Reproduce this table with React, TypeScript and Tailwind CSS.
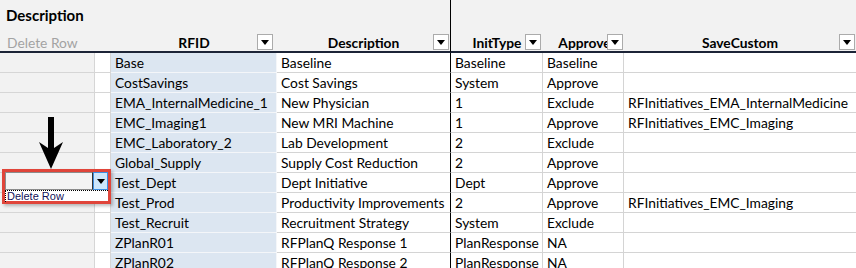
import { Fragment } from "react";

type Row = [string, string, string, string, string];

const ROWS: Row[] = [
  ["Base", "Baseline", "Baseline", "Baseline", ""],
  ["CostSavings", "Cost Savings", "System", "Approve", ""],
  ["EMA_InternalMedicine_1", "New Physician", "1", "Exclude", "RFInitiatives_EMA_InternalMedicine"],
  ["EMC_Imaging1", "New MRI Machine", "1", "Approve", "RFInitiatives_EMC_Imaging"],
  ["EMC_Laboratory_2", "Lab Development", "2", "Exclude", ""],
  ["Global_Supply", "Supply Cost Reduction", "2", "Approve", ""],
  ["Test_Dept", "Dept Initiative", "Dept", "Approve", ""],
  ["Test_Prod", "Productivity Improvements", "2", "Approve", "RFInitiatives_EMC_Imaging"],
  ["Test_Recruit", "Recruitment Strategy", "System", "Exclude", ""],
  ["ZPlanR01", "RFPlanQ Response 1", "PlanResponse", "NA", ""],
  ["ZPlanR02", "RFPlanQ Response 2", "PlanResponse", "NA", ""],
];

// filtro de encabezado (flechita de la tabla)
function FilterButton({ className }: { className: string }) {
  return (
    <span
      className={`absolute top-[1px] flex h-4 w-4 items-center justify-center border border-[#ababab] bg-white ${className}`}
    >
      <svg width="8" height="5" viewBox="0 0 8 5">
        <path d="M0 0h8L4 5z" fill="#000" />
      </svg>
    </span>
  );
}

const cell = "h-5 overflow-hidden whitespace-nowrap border-b pl-1 leading-[19px]";
const head = "relative h-[20px] overflow-hidden whitespace-nowrap border-b-2 border-[#1c2437] text-center font-bold leading-[19px]";

export default function App() {
  return (
    <div className="relative h-[268px] w-[856px] overflow-hidden bg-[#f2f2f2] font-['Lato',sans-serif] text-[13.8px] text-black">
      <div className="grid grid-cols-[95px_16px_166px_174px_92px_81px_1fr]">
        {/* titulo */}
        <div className="col-span-4 h-[33px] border-r border-black pl-[6px] pt-[4px] text-[15px] font-bold">
          Description
        </div>
        <div className="col-span-3 h-[33px]" />

        {/* encabezados */}
        <div className="col-span-2 h-[20px] border-b-2 border-[#1c2437] pl-[7px] leading-[19px] text-[#a3a3a3]">
          Delete Row
        </div>
        <div className={head}>
          RFID
          <FilterButton className="right-[4px]" />
        </div>
        <div className={`${head} border-r border-r-black`}>
          Description
          <FilterButton className="right-[1px]" />
        </div>
        <div className={head}>
          InitType
          <FilterButton className="right-[2px]" />
        </div>
        <div className={head}>
          <span className="ml-[2px]">Approve</span>
          <FilterButton className="right-[1px]" />
        </div>
        <div className={head}>
          SaveCustom
          <FilterButton className="right-[1px]" />
        </div>

        {/* filas */}
        {ROWS.map((r) => (
          <Fragment key={r[0]}>
            <div className="h-5 border-b border-r border-[#d6d6d6] bg-[#f2f2f2]" />
            <div className="h-5 border-b border-r border-[#d6d6d6] bg-white" />
            <div className={`${cell} border-r border-[#f4f6f9] bg-[#dce6f1]`}>{r[0]}</div>
            <div className={`${cell} border-r border-[#d4d4d4] border-r-black bg-white`}>{r[1]}</div>
            <div className={`${cell} border-r border-[#d4d4d4] bg-white`}>{r[2]}</div>
            <div className={`${cell} border-r border-[#d4d4d4] bg-white`}>{r[3]}</div>
            <div className={`${cell} border-[#d4d4d4] bg-white`}>{r[4]}</div>
          </Fragment>
        ))}
      </div>

      {/* flecha indicadora */}
      <svg className="absolute left-[38px] top-[116px]" width="26" height="54" viewBox="0 0 26 54">
        <rect x="10" y="1" width="6" height="36" fill="#000" />
        <path d="M1 26L13 34L25 26L13 53Z" fill="#000" />
      </svg>

      {/* combo "Delete Row" resaltado */}
      <div className="absolute left-[2px] top-[169px] h-[35px] w-[109px] border-[3px] border-[#e0453a] bg-white shadow-[2px_2px_3px_rgba(0,0,0,0.25)]">
        <div className="flex h-[18px]">
          <div className="flex-1 border border-[#8c8c8c] border-r-[#333] bg-[#f4f4f4]" />
          <div className="flex w-[15px] items-center justify-center border border-[#3d8ee0] bg-[#cce6fb]">
            <svg width="8" height="5" viewBox="0 0 8 5">
              <path d="M0 0h8L4 5z" fill="#000" />
            </svg>
          </div>
        </div>
        <div className="h-[11px] border-t border-dotted border-black">
          <span className="block w-fit border-l border-dotted border-black pl-[1px] font-['Liberation_Sans',sans-serif] text-[11px] leading-[11px] text-[#13135a]">
            Delete Row
          </span>
        </div>
      </div>
    </div>
  );
}
